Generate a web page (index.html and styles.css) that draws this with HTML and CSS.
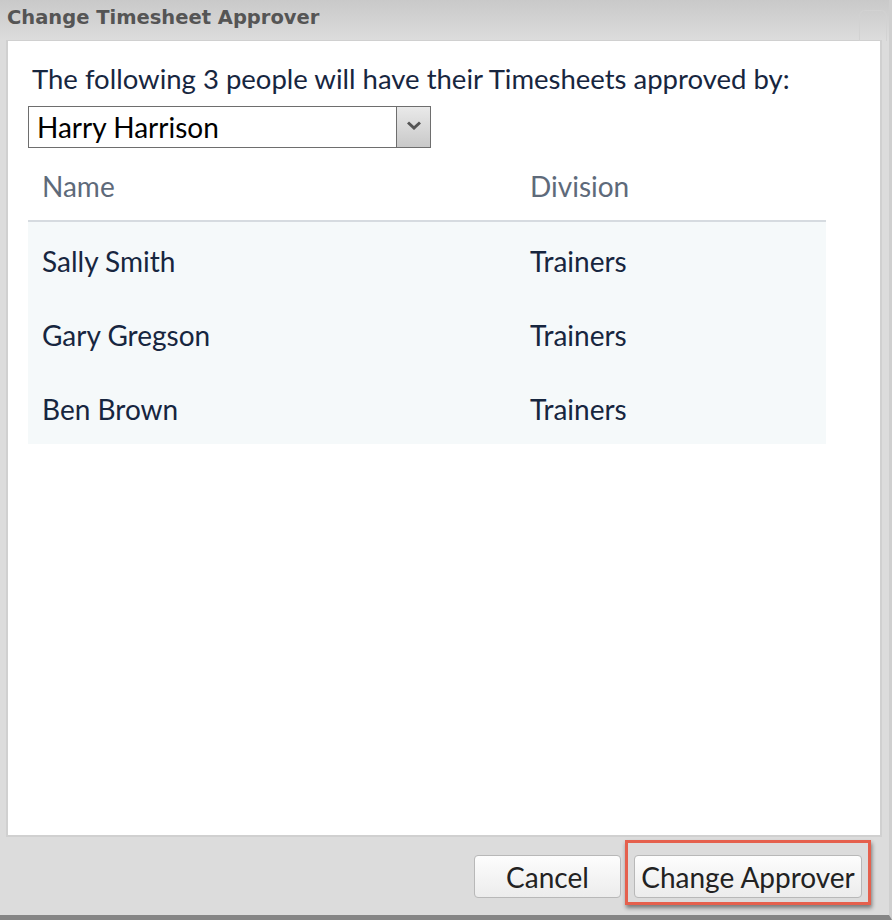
FILE: index.html
```html
<!DOCTYPE html>
<html lang="en">
<head>
  <meta charset="UTF-8" />
  <meta name="viewport" content="width=device-width, initial-scale=1.0"/>
  <title>Change Timesheet Approver</title>
  <link rel="stylesheet" href="styles.css">
</head>
<body>
  <div class="dialog">
    <div class="titlebar">
      <h1>Change Timesheet Approver</h1>
      <span class="close-ghost"></span>
    </div>

    <div class="panel">
      <p class="intro">The following 3 people will have their Timesheets approved by:</p>
      <div class="select">
        <span class="select-value">Harry Harrison</span>
        <span class="select-arrow">
          <svg width="14" height="9" viewBox="0 0 14 9"><path d="M1 1.5 L7 7 L13 1.5" fill="none" stroke="#555" stroke-width="3"/></svg>
        </span>
      </div>

      <table class="people">
        <thead>
          <tr><th class="col-name">Name</th><th>Division</th></tr>
        </thead>
        <tbody>
          <tr><td>Sally Smith</td><td>Trainers</td></tr>
          <tr><td>Gary Gregson</td><td>Trainers</td></tr>
          <tr><td>Ben Brown</td><td>Trainers</td></tr>
        </tbody>
      </table>
    </div>

    <div class="footer">
      <button class="button">Cancel</button>
      <div class="focus-ring">
        <button class="button button-wide">Change Approver</button>
      </div>
    </div>
  </div>
</body>
</html>
```

FILE: styles.css
```css
body {
  margin: 0;
  padding: 0;
  background-color: #dcdcdc;
  font-family: Lato, "Open Sans", sans-serif;
}
.dialog {
  height: 920px;
  display: flex;
  flex-direction: column;
  box-sizing: border-box;
  border-bottom: 5px solid #858585;
  border-right: 3px solid #cfcfcf;
}
.titlebar {
  height: 40px;
  flex: none;
  position: relative;
  background: linear-gradient(#c9c9c9, #dcdcdc);
}
.titlebar h1 {
  margin: 0;
  padding: 7px 0 0 7px;
  font-family: "DejaVu Sans", Verdana, sans-serif;
  font-size: 19.5px;
  line-height: 22px;
  font-weight: bold;
  color: #555;
}
.close-ghost {
  position: absolute;
  right: 2px;
  top: 10px;
  width: 26px;
  height: 30px;
  border: 1px solid #d2d2d2;
  border-bottom: none;
  border-radius: 6px 6px 0 0;
}
.panel {
  margin: 0 7px 0 6px;
  height: 794px;
  background-color: #fff;
  border: 2px solid #d0d0d0;
  border-top: 1px solid #d0d0d0;
  padding: 0 0 0 20px;
}
.intro {
  margin: 23px 0 12px 4px;
  font-size: 27.5px;
  line-height: 30px;
  color: #17263f;
}
.select {
  width: 401px;
  height: 40px;
  border: 1px solid #6e6e6e;
  display: flex;
  align-items: stretch;
}
.select-value {
  flex: 1;
  padding-left: 8px;
  font-size: 28px;
  line-height: 40px;
  color: #000;
}
.select-arrow {
  width: 34px;
  border-left: 1px solid #6e6e6e;
  background: linear-gradient(#e9e9e9, #c9c9c9);
  display: flex;
  align-items: center;
  justify-content: center;
  padding-bottom: 4px;
  box-sizing: border-box;
}
.people {
  width: 798px;
  border-collapse: collapse;
  margin-top: 12px;
}
.people th {
  text-align: left;
  font-weight: normal;
  font-size: 28px;
  color: #5e6a7a;
  height: 52px;
  padding: 0 0 8px 14px;
  border-bottom: 2px solid #d6dbe0;
}
.people th.col-name {
  width: 474px;
}
.people tbody tr {
  background-color: #f5f9fa;
}
.people td {
  font-size: 28px;
  color: #17263f;
  height: 70px;
  padding: 4px 0 0 14px;
}
.footer {
  flex: 1;
  display: flex;
  justify-content: flex-end;
  align-items: flex-start;
  padding: 1px 18px 0 0;
  gap: 4px;
}
.button {
  height: 43px;
  margin-top: 17px;
  min-width: 147px;
  padding: 0 4px;
  font-family: Lato, "Open Sans", sans-serif;
  font-size: 28px;
  color: #222;
  background: linear-gradient(#fdfdfd, #ececec);
  border: 1px solid #b8b8b8;
  border-radius: 4px;
}
.focus-ring {
  border: 3px solid #e5604d;
  padding: 12px 6px 4px 6px;
  box-shadow: 1px 3px 4px rgba(0, 0, 0, 0.45);
  margin-top: 2px;
}
.focus-ring .button {
  margin-top: 0;
}
.button-wide {
  width: 228px;
}
```
